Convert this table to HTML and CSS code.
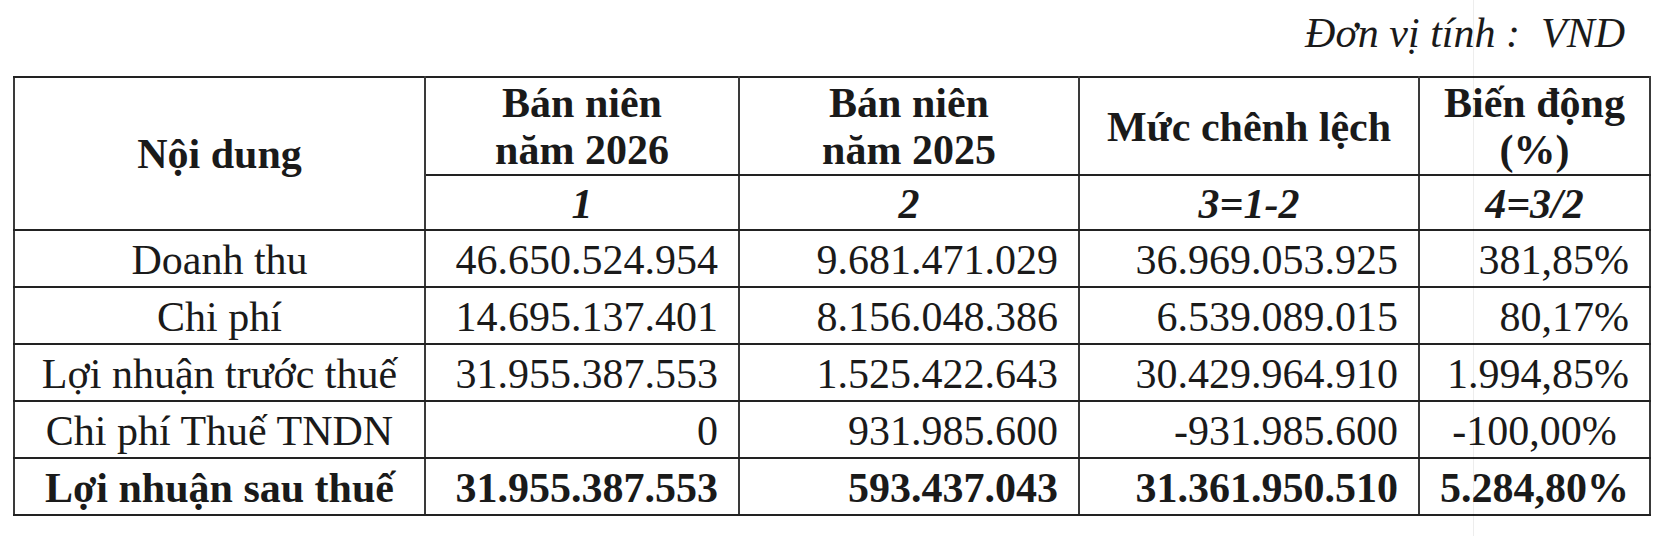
FILE: index.html
```html
<!DOCTYPE html>
<html lang="vi">
<head>
<meta charset="utf-8">
<title>Kết quả kinh doanh bán niên</title>
<link rel="stylesheet" href="styles.css">
</head>
<body>
<div class="page">
  <p class="unit">Đơn vị tính :&nbsp; VND</p>
  <table class="report">
    <colgroup>
      <col class="c-label">
      <col class="c-cur">
      <col class="c-prev">
      <col class="c-diff">
      <col class="c-pct">
    </colgroup>
    <thead>
      <tr class="h-top">
        <th rowspan="2">Nội dung</th>
        <th>Bán niên<br>năm 2026</th>
        <th>Bán niên<br>năm 2025</th>
        <th>Mức chênh lệch</th>
        <th>Biến động<br>(%)</th>
      </tr>
      <tr class="h-idx">
        <th class="idx">1</th>
        <th class="idx">2</th>
        <th class="idx">3=1-2</th>
        <th class="idx">4=3/2</th>
      </tr>
    </thead>
    <tbody>
      <tr>
        <td>Doanh thu</td>
        <td class="num">46.650.524.954</td>
        <td class="num">9.681.471.029</td>
        <td class="num">36.969.053.925</td>
        <td class="num">381,85%</td>
      </tr>
      <tr>
        <td>Chi phí</td>
        <td class="num">14.695.137.401</td>
        <td class="num">8.156.048.386</td>
        <td class="num">6.539.089.015</td>
        <td class="num">80,17%</td>
      </tr>
      <tr>
        <td>Lợi nhuận trước thuế</td>
        <td class="num">31.955.387.553</td>
        <td class="num">1.525.422.643</td>
        <td class="num">30.429.964.910</td>
        <td class="num">1.994,85%</td>
      </tr>
      <tr>
        <td>Chi phí Thuế TNDN</td>
        <td class="num">0</td>
        <td class="num">931.985.600</td>
        <td class="num">-931.985.600</td>
        <td>-100,00%</td>
      </tr>
      <tr class="total">
        <td>Lợi nhuận sau thuế</td>
        <td class="num">31.955.387.553</td>
        <td class="num">593.437.043</td>
        <td class="num">31.361.950.510</td>
        <td class="num">5.284,80%</td>
      </tr>
    </tbody>
  </table>
  <div class="fold" aria-hidden="true"></div>
</div>
</body>
</html>
```
FILE: styles.css
```css
html, body {
  margin: 0;
  background: #ffffff;
}

body {
  font-family: "Liberation Serif", "Times New Roman", serif;
  font-size: 42px;
  color: #1a1a1a;
}

.page {
  position: relative;
  width: 1662px;
  height: 536px;
  overflow: hidden;
}

.unit {
  margin: 0 37px 20px 0;
  padding-top: 10px;
  line-height: 46px;
  text-align: right;
  font-style: italic;
}

.report {
  margin-left: 13px;
  width: 1636px;
  border-collapse: collapse;
  table-layout: fixed;
}

.c-label { width: 411px; }
.c-cur   { width: 314px; }
.c-prev  { width: 340px; }
.c-diff  { width: 340px; }
.c-pct   { width: 231px; }

.report th,
.report td {
  border-top: 2px solid #222;
  border-bottom: 2px solid #222;
  border-left: 2px solid #3a3a3a;
  border-right: 2px solid #3a3a3a;
  padding: 2px 20px 0;
  line-height: 46px;
  text-align: center;
  vertical-align: middle;
  white-space: nowrap;
}

.report th {
  font-weight: bold;
  line-height: 47px;
}

.h-top {
  height: 98px;
}

.h-idx {
  height: 55px;
}

.report th.idx {
  font-style: italic;
  line-height: 46px;
}

.report tbody tr {
  height: 57px;
}

.report td.num {
  text-align: right;
}

.report tr.total td {
  font-weight: bold;
}

/* faint fold line of the scanned page */
.fold {
  position: absolute;
  top: 0;
  bottom: 0;
  left: 1473px;
  width: 1px;
  background: rgba(0, 0, 0, 0.07);
  pointer-events: none;
}
```
